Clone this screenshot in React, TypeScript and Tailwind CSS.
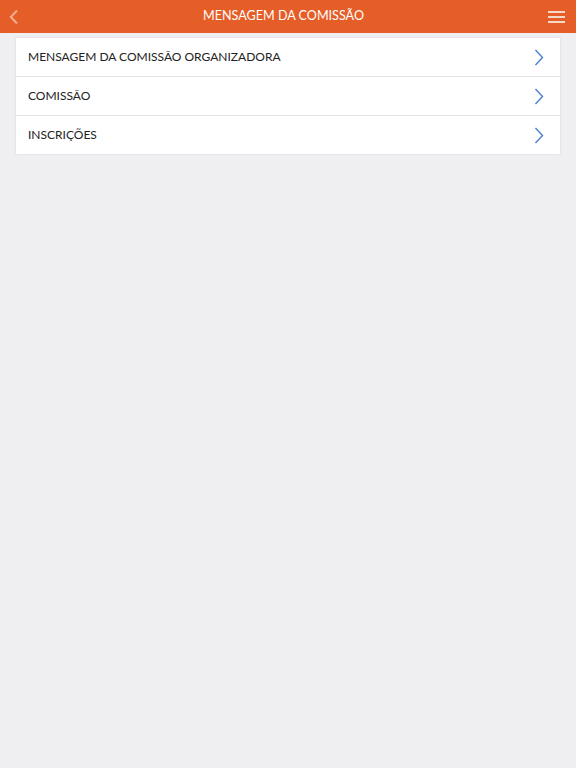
const items = ['MENSAGEM DA COMISSÃO ORGANIZADORA', 'COMISSÃO', 'INSCRIÇÕES'];

export default function App() {
  return (
    <div className="min-h-[768px] bg-[#efeef1] font-['Lato',sans-serif]">
      <header className="flex h-[33px] items-center justify-between bg-[#e55d27] px-2">
        <svg width="10" height="16" viewBox="0 0 10 16" className="ml-[1px]">
          <path d="M8 1.5 1.8 8 8 14.5" fill="none" stroke="#f3ae92" strokeWidth="2" />
        </svg>
        <h1 className="text-[12.6px] text-white">MENSAGEM DA COMISSÃO</h1>
        <svg width="17" height="12" viewBox="0 0 17 12" className="mr-[3px]">
          <path d="M0 1h17M0 6h17M0 11h17" stroke="#fff" strokeWidth="1.5" />
        </svg>
      </header>
      <div className="mx-4 mt-[5px] bg-white shadow-[0_0_2px_rgba(0,0,0,0.12)]">
        {items.map((item, i) => (
          <div
            key={item}
            className={`flex h-[38px] items-center justify-between pl-3 pr-[16px] ${i > 0 ? 'h-[39px] border-t border-[#e4e4e6]' : ''}`}
          >
            <span className="text-[12px] text-[#222]">{item}</span>
            <svg width="10" height="17" viewBox="0 0 10 17">
              <path d="M1.5 1 8.5 8.5 1.5 16" fill="none" stroke="#4a7fd0" strokeWidth="1.4" />
            </svg>
          </div>
        ))}
      </div>
    </div>
  );
}
